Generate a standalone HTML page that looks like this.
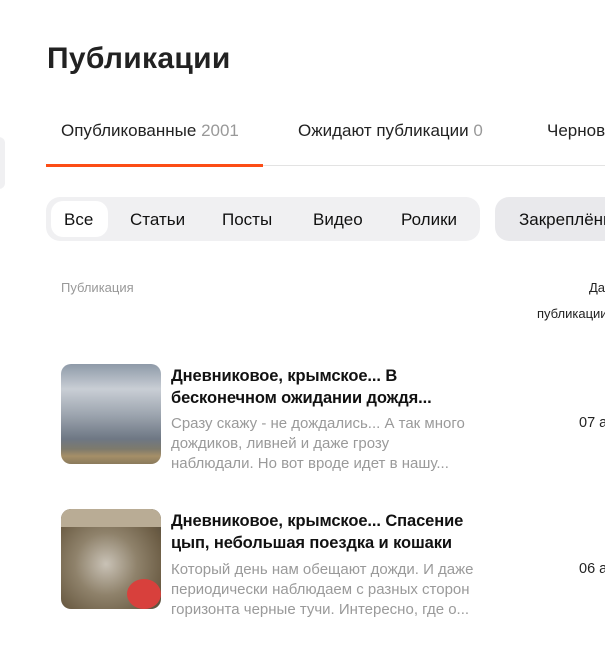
<!DOCTYPE html>
<html><head><meta charset="utf-8"><style>
*{margin:0;padding:0;box-sizing:border-box}
body{width:605px;height:646px;overflow:hidden;background:#fff;font-family:"Liberation Sans","DejaVu Sans",sans-serif;color:#000;position:relative}
.a{position:absolute;white-space:nowrap}
h1{position:absolute;left:47px;top:42px;font-size:30px;font-weight:bold;color:#222;letter-spacing:0.3px}
.tab{font-size:17px;color:#222;top:121px}
.tab span{color:#999}
.seg{position:absolute;left:46px;top:197px;width:434px;height:44px;background:#f0f0f2;border-radius:14px}
.pill{position:absolute;left:5px;top:4px;width:57px;height:36px;background:#fff;border-radius:12px}
.s{font-size:17px;top:210px;color:#111}
.img{position:absolute;left:61px;width:100px;height:100px;border-radius:10px;overflow:hidden}
.t{font-size:16.5px;font-weight:bold;left:171px;line-height:22px;color:#111;letter-spacing:-0.1px}
.d{font-size:15px;color:#9a9a9a;left:171px;line-height:20px}
.dt{font-size:14.5px;color:#222;left:579px}
</style></head><body>
<div class="a" style="left:-10px;top:137px;width:15px;height:52px;background:#f0f0f2;border-radius:6px"></div>
<h1>Публикации</h1>
<div class="a tab" style="left:61px">Опубликованные <span>2001</span></div>
<div class="a tab" style="left:298px">Ожидают публикации <span>0</span></div>
<div class="a tab" style="left:547px">Черновики</div>
<div class="a" style="left:46px;top:165px;width:559px;height:1px;background:#e3e3e3"></div>
<div class="a" style="left:46px;top:164px;width:217px;height:3px;background:#fc4d16"></div>
<div class="seg"><div class="pill"></div></div>
<div class="a s" style="left:64px">Все</div>
<div class="a s" style="left:130px">Статьи</div>
<div class="a s" style="left:222px">Посты</div>
<div class="a s" style="left:313px">Видео</div>
<div class="a s" style="left:401px">Ролики</div>
<div class="a" style="left:495px;top:197px;width:130px;height:44px;background:#e9e9ec;border-radius:14px"></div>
<div class="a s" style="left:519px">Закреплённые</div>
<div class="a" style="left:61px;top:280px;font-size:13px;color:#999">Публикация</div>
<div class="a" style="left:589px;top:280px;font-size:13px;color:#222">Дата</div>
<div class="a" style="left:537px;top:306px;font-size:13px;color:#222">публикации</div>

<div class="img" style="top:364px;background:linear-gradient(180deg,#8e9aa8 0%,#c9ced5 25%,#9ea6b0 50%,#6e7784 75%,#7d7a6c 85%,#a58f68 92%,#8a7a5c 100%)"></div>
<div class="a t" style="top:365px">Дневниковое, крымское... В<br>бесконечном ожидании дождя...</div>
<div class="a d" style="top:414px">Сразу скажу - не дождались... А так много<br>дождиков, ливней и даже грозу<br>наблюдали. Но вот вроде идет в нашу...</div>
<div class="a dt" style="top:415px">07 авг</div>

<div class="img" style="top:509px;background:radial-gradient(circle at 45% 55%,#c9c2b6 0%,#8f826b 40%,#6c5d45 75%,#4d4538 100%)"><div style="position:absolute;left:0;top:0;width:100px;height:18px;background:#b9ac95"></div><div style="position:absolute;right:0;bottom:0;width:34px;height:30px;border-radius:50%;background:#d8403c"></div></div>
<div class="a t" style="top:510px">Дневниковое, крымское... Спасение<br>цып, небольшая поездка и кошаки</div>
<div class="a d" style="top:560px">Который день нам обещают дожди. И даже<br>периодически наблюдаем с разных сторон<br>горизонта черные тучи. Интересно, где о...</div>
<div class="a dt" style="top:561px">06 авг</div>
</body></html>
